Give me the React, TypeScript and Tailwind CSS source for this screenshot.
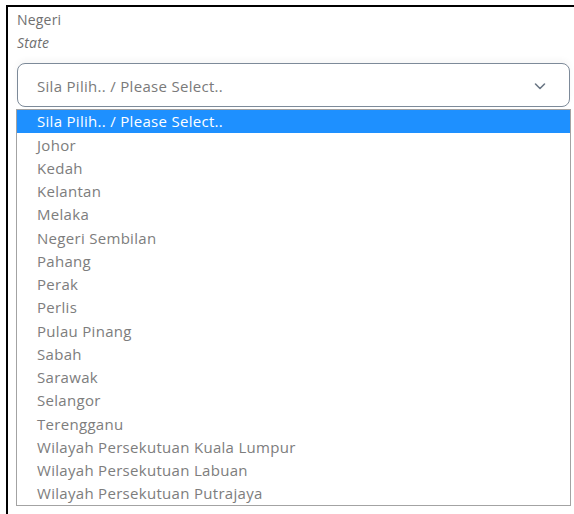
import React from 'react';

const states = [
  'Johor',
  'Kedah',
  'Kelantan',
  'Melaka',
  'Negeri Sembilan',
  'Pahang',
  'Perak',
  'Perlis',
  'Pulau Pinang',
  'Sabah',
  'Sarawak',
  'Selangor',
  'Terengganu',
  'Wilayah Persekutuan Kuala Lumpur',
  'Wilayah Persekutuan Labuan',
  'Wilayah Persekutuan Putrajaya',
];

const placeholder = 'Sila Pilih.. / Please Select..';

const App = () => {
  return (
    <div
      className="relative h-[514px] w-[574px] overflow-hidden bg-white pl-[6px] pt-[5px]"
      style={{ fontFamily: '"Open Sans", "Noto Sans", sans-serif' }}
    >
      <div className="h-full border-l-2 border-t-2 border-black pl-[9px] pr-[4px]">
        {/* field label, Malay first with English underneath */}
        <div className="pt-[1px] text-[14px] leading-[23px] tracking-[0.2px] text-[#707070]">Negeri</div>
        <div className="text-[14px] italic leading-[23px] tracking-[0.2px] text-[#707070]">State</div>

        <div className="mt-[9px] flex h-[44px] items-center justify-between rounded-[8px] border border-[#7d8a99] bg-white pl-[19px] pr-[22px] pt-[2px] shadow-[0_-3px_6px_rgba(0,0,0,0.04)]">
          <span className="text-[15px] tracking-[0.3px] text-[#7a7a7a]">{placeholder}</span>
          <svg width="14" height="14" viewBox="0 0 14 14" fill="none">
            <path d="M2.5 5l4.5 4.5L11.5 5" stroke="#6b7785" strokeWidth="1.6" strokeLinecap="round" strokeLinejoin="round" />
          </svg>
        </div>
      </div>

      {/* open option list */}
      <ul className="absolute left-[16px] top-[109px] w-[555px] border border-[#a3a3a3] bg-white text-[15px] tracking-[0.3px]">
        <li className="flex h-[23.25px] items-center bg-[#1e90ff] pl-[20px] text-white">{placeholder}</li>
        {states.map((s) => (
          <li key={s} className="flex h-[23.25px] items-center pl-[20px] text-[#7d7d7d]">
            {s}
          </li>
        ))}
      </ul>
    </div>
  );
};

export default App;
